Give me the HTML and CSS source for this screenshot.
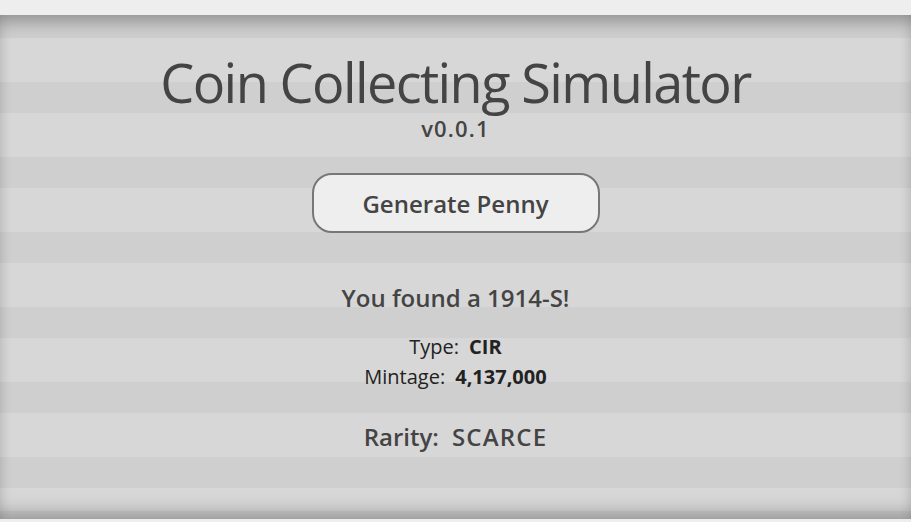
FILE: index.html
```html
<!DOCTYPE html>
<html>
<head>
<meta charset="utf-8">
<link rel="stylesheet" href="styles.css">
</head>
<body>
<main class="stage">
  <h1 class="title">Coin Collecting Simulator</h1>
  <div class="version">v0.0.1</div>
  <button class="gen-btn">Generate Penny</button>
  <div class="found">You found a 1914-S!</div>
  <div class="detail"><span class="label">Type:</span><span class="value">CIR</span></div>
  <div class="detail"><span class="label">Mintage:</span><span class="value">4,137,000</span></div>
  <div class="rarity"><span class="label">Rarity:</span><span class="value">SCARCE</span></div>
</main>
</body>
</html>
```
FILE: styles.css
```css
html, body {
  margin: 0;
  padding: 0;
}
body {
  background: #eeeeee;
  padding-top: 15px;
  font-family: "Open Sans", "Noto Sans", sans-serif;
  color: #444444;
}
.stage {
  height: 504px;
  box-sizing: border-box;
  padding-top: 36px;
  display: flex;
  flex-direction: column;
  align-items: center;
  background: repeating-linear-gradient(to bottom, #cfcfcf 0, #cfcfcf 31px, #d7d7d7 31px, #d7d7d7 75px);
  background-position: 0 -8px;
  box-shadow: inset 0 14px 18px -8px rgba(0,0,0,0.32), inset 0 -14px 18px -8px rgba(0,0,0,0.28);
}
.title {
  margin: 0;
  font-size: 54px;
  line-height: 62px;
  font-weight: 500;
  letter-spacing: -1.6px;
  color: #444444;
}
.version {
  margin-top: 2px;
  font-size: 22px;
  line-height: 26px;
  font-weight: 600;
  letter-spacing: 1.2px;
}
.gen-btn {
  margin-top: 32px;
  width: 288px;
  height: 60px;
  border: 2px solid #777777;
  border-radius: 20px;
  background: #eeeeee;
  font-family: inherit;
  font-size: 24px;
  font-weight: 600;
  color: #444444;
  padding: 0;
}
.found {
  margin-top: 50px;
  font-size: 24px;
  line-height: 30px;
  font-weight: 600;
}
.detail {
  font-size: 20px;
  line-height: 30px;
  color: #222222;
}
.found + .detail {
  margin-top: 19px;
}
.detail .value {
  font-weight: 700;
  margin-left: 10px;
}
.rarity {
  margin-top: 30px;
  font-size: 24px;
  line-height: 30px;
  font-weight: 600;
}
.rarity .value {
  margin-left: 13px;
  letter-spacing: 1.2px;
}
```
